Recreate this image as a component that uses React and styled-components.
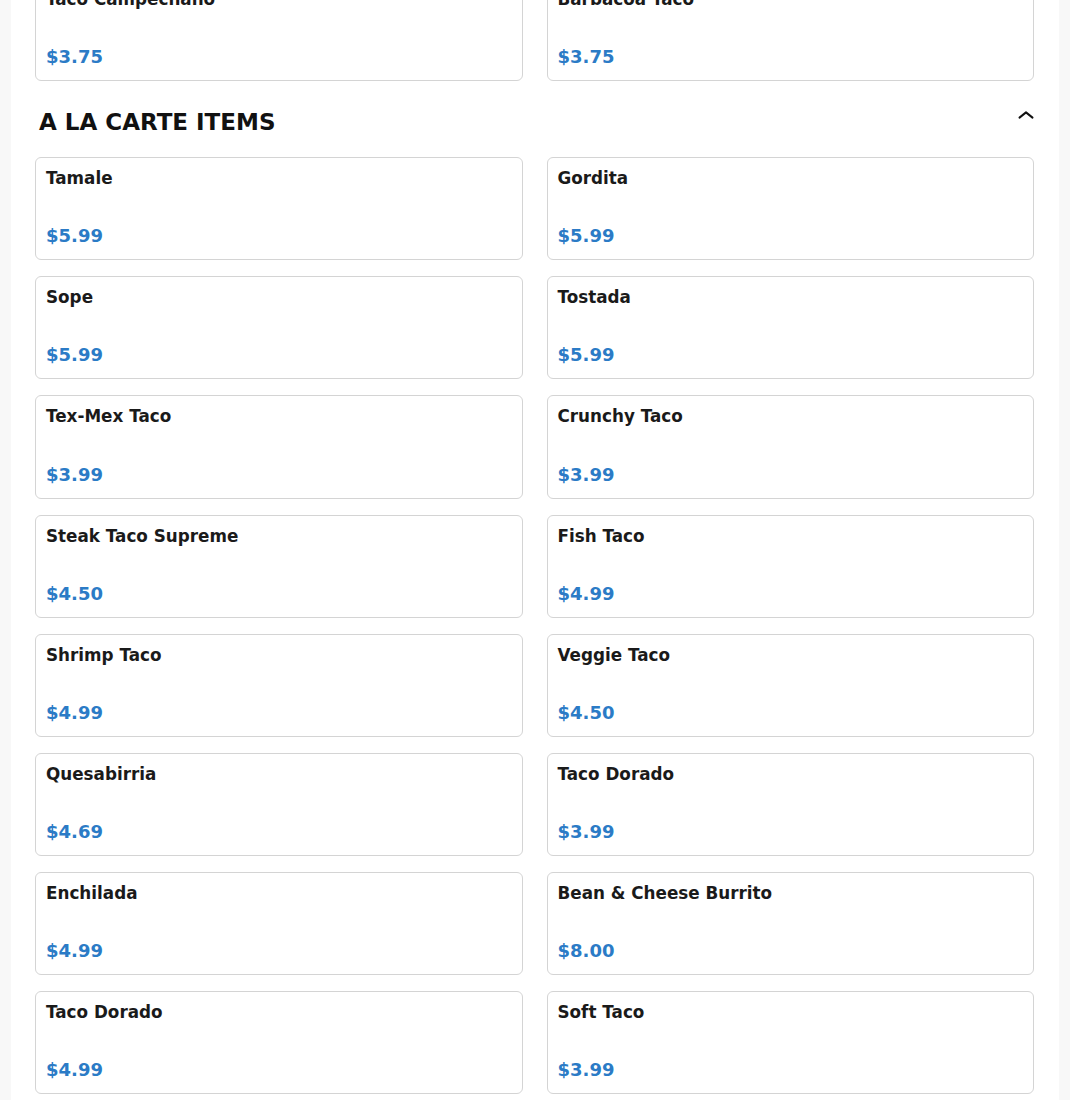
import styled, { createGlobalStyle } from "styled-components";

const GlobalStyle = createGlobalStyle`
  html, body {
    margin: 0;
    padding: 0;
    background-color: #f8f8f8;
    font-family: "DejaVu Sans", Verdana, sans-serif;
  }
  * { box-sizing: border-box; }
`;

// page is shown scrolled a bit, so the top row of the previous section is cut off
const Page = styled.div`
  margin: -22px 11px 0;
  padding: 0 25px 24px 24px;
  background-color: #ffffff;
  min-height: 1200px;
`;

const Section = styled.section`
  display: flex;
  flex-direction: column;
`;

const SectionHeader = styled.div`
  display: flex;
  justify-content: space-between;
  align-items: flex-start;
  padding: 0 0 0 4px;
  margin: 28px 0 21px;
`;

const SectionTitle = styled.h2`
  margin: 0;
  font-size: 23px;
  line-height: 27px;
  font-weight: 700;
  color: #111111;
`;

const Toggle = styled.button`
  border: none;
  background: none;
  padding: 0;
  display: flex;
  color: #111111;
  cursor: pointer;
`;

const Grid = styled.div`
  display: grid;
  grid-template-columns: 1fr 1fr;
  column-gap: 24px;
  row-gap: 16px;
`;

const Card = styled.div`
  display: flex;
  flex-direction: column;
  justify-content: space-between;
  min-height: 103.15px;
  padding: 10px 10px 13px;
  border: 1px solid #d4d4d4;
  border-radius: 6px;
  background-color: #ffffff;
`;

const ItemName = styled.div`
  font-size: 16.8px;
  line-height: 21px;
  font-weight: 700;
  color: #1a1a1a;
`;

const Price = styled.div`
  font-size: 18px;
  line-height: 21px;
  font-weight: 700;
  color: #2b7bc6;
`;

const ChevronUp = () => (
  <svg width="16" height="12" viewBox="0 0 16 12" fill="none">
    <polyline
      points="1.5,8.6 8,3.4 14.5,8.6"
      stroke="currentColor"
      strokeWidth="2"
      strokeLinecap="round"
      strokeLinejoin="round"
    />
  </svg>
);

const previousItems = [
  { name: "Taco Campechano", price: "$3.75" },
  { name: "Barbacoa Taco", price: "$3.75" },
];

const aLaCarte = [
  { name: "Tamale", price: "$5.99" },
  { name: "Gordita", price: "$5.99" },
  { name: "Sope", price: "$5.99" },
  { name: "Tostada", price: "$5.99" },
  { name: "Tex-Mex Taco", price: "$3.99" },
  { name: "Crunchy Taco", price: "$3.99" },
  { name: "Steak Taco Supreme", price: "$4.50" },
  { name: "Fish Taco", price: "$4.99" },
  { name: "Shrimp Taco", price: "$4.99" },
  { name: "Veggie Taco", price: "$4.50" },
  { name: "Quesabirria", price: "$4.69" },
  { name: "Taco Dorado", price: "$3.99" },
  { name: "Enchilada", price: "$4.99" },
  { name: "Bean & Cheese Burrito", price: "$8.00" },
  { name: "Taco Dorado", price: "$4.99" },
  { name: "Soft Taco", price: "$3.99" },
];

const MenuGrid = ({ items }) => (
  <Grid>
    {items.map((item, i) => (
      <Card key={i}>
        <ItemName>{item.name}</ItemName>
        <Price>{item.price}</Price>
      </Card>
    ))}
  </Grid>
);

const App = () => {
  return (
    <>
      <GlobalStyle />
      <Page>
        <Section>
          <MenuGrid items={previousItems} />
        </Section>
        <Section>
          <SectionHeader>
            <SectionTitle>A LA CARTE ITEMS</SectionTitle>
            <Toggle aria-label="Collapse section">
              <ChevronUp />
            </Toggle>
          </SectionHeader>
          <MenuGrid items={aLaCarte} />
        </Section>
      </Page>
    </>
  );
};

export default App;
